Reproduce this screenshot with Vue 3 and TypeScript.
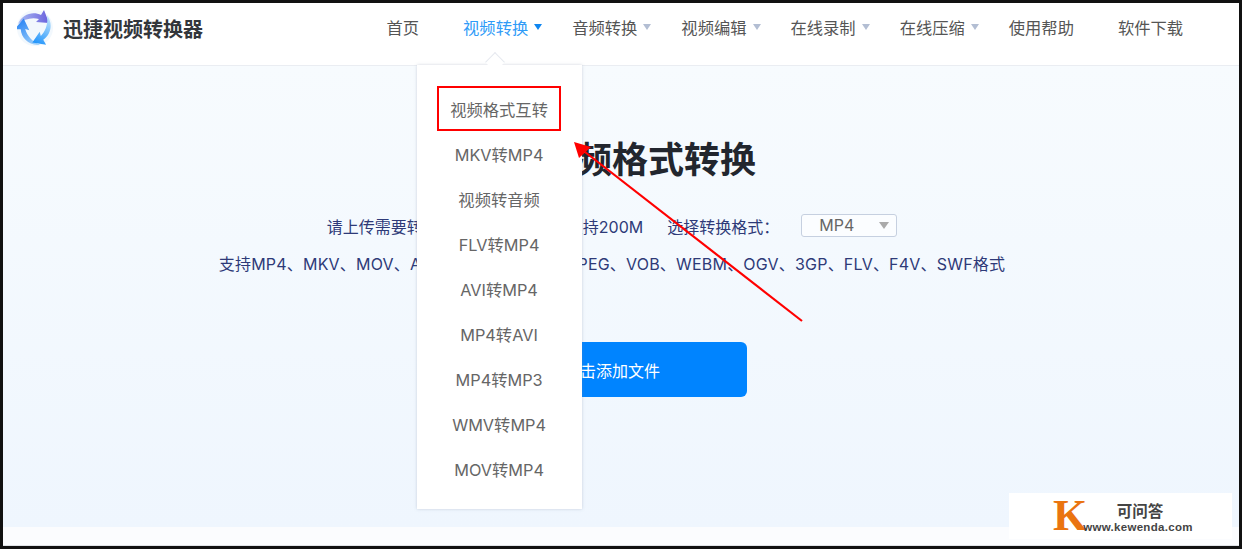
<script setup lang="ts">
const navItems = [
  { label: '首页', caret: false },
  { label: '视频转换', caret: true, active: true },
  { label: '音频转换', caret: true },
  { label: '视频编辑', caret: true },
  { label: '在线录制', caret: true },
  { label: '在线压缩', caret: true },
  { label: '使用帮助', caret: false },
  { label: '软件下载', caret: false },
]

const menuItems = [
  '视频格式互转',
  'MKV转MP4',
  '视频转音频',
  'FLV转MP4',
  'AVI转MP4',
  'MP4转AVI',
  'MP4转MP3',
  'WMV转MP4',
  'MOV转MP4',
]
</script>

<template>
  <div class="frame">
    <header class="header">
      <div class="brand">
        <svg class="logo" viewBox="-18 -18 36 36" width="36" height="36">
          <defs>
            <linearGradient id="g1" x1="0" y1="0" x2="1" y2="0">
              <stop offset="0" stop-color="#a9bdf4" />
              <stop offset="1" stop-color="#6a60dc" />
            </linearGradient>
            <linearGradient id="g2" x1="0" y1="0" x2="1" y2="0">
              <stop offset="0" stop-color="#a9d6fb" />
              <stop offset="1" stop-color="#2b86f4" />
            </linearGradient>
            <linearGradient id="g3" x1="0" y1="0" x2="1" y2="0">
              <stop offset="0" stop-color="#c6e6fc" />
              <stop offset="1" stop-color="#1c92fb" />
            </linearGradient>
          </defs>
          <circle r="18" fill="#f2f8fd" />
          <path fill="url(#g1)" d="M-17,-4 C-13,-14 -2,-17 6,-13 L9,-18 L14,-5 L1,-6 L4,-9 C-3,-11 -11,-9 -17,-4Z" />
          <path fill="url(#g2)" transform="rotate(-120)" d="M-17,-4 C-13,-14 -2,-17 6,-13 L9,-18 L14,-5 L1,-6 L4,-9 C-3,-11 -11,-9 -17,-4Z" />
          <path fill="url(#g3)" transform="rotate(120)" d="M-17,-4 C-13,-14 -2,-17 6,-13 L9,-18 L14,-5 L1,-6 L4,-9 C-3,-11 -11,-9 -17,-4Z" />
        </svg>
        <span class="brand-name">迅捷视频转换器</span>
      </div>
      <nav class="nav">
        <div v-for="item in navItems" :key="item.label" class="nav-item" :class="{ active: item.active, caret: item.caret }">
          {{ item.label }}
          <div v-if="item.active" class="menu">
            <span class="menu-notch"></span>
            <div v-for="(m, i) in menuItems" :key="m" class="menu-row" :class="{ marked: i === 0 }">{{ m }}</div>
          </div>
        </div>
      </nav>
    </header>

    <main class="hero">
      <h1 class="title">在线视频格式转换</h1>
      <div class="upload-row">
        <span>请上传需要转换的视频文件，最大支持200M</span>
        <span class="format-label">选择转换格式：</span>
        <div class="select">MP4</div>
      </div>
      <p class="formats">支持MP4、MKV、MOV、AVI、WMV、M4V、MPEG、VOB、WEBM、OGV、3GP、FLV、F4V、SWF格式</p>
      <button class="add-btn">点击添加文件</button>
    </main>
    <div class="foot"></div>

    <!-- annotation drawn over the screenshot -->
    <svg class="annotation" width="1242" height="549" viewBox="0 0 1242 549">
      <line x1="802" y1="321" x2="585" y2="152" stroke="#f00" stroke-width="2.2" />
      <polygon points="574,142 591,147 579,158" fill="#f00" />
    </svg>

    <div class="watermark">
      <span class="wm-k">K</span>
      <div class="wm-text">
        <span class="wm-cn">可问答</span>
        <span class="wm-url">www.kewenda.com</span>
      </div>
    </div>
  </div>
</template>

<style>
html,
body {
  margin: 0;
  background: #111;
}
</style>

<style scoped>
.frame {
  position: relative;
  box-sizing: border-box;
  width: 1242px;
  height: 549px;
  border: 3px solid #111;
  background: #fbfcfe;
  overflow: hidden;
  display: flex;
  flex-direction: column;
  font-family: Inter, "Noto Sans CJK SC", sans-serif;
}

.header {
  flex: none;
  box-sizing: border-box;
  height: 63px;
  padding: 0 0 12px 14px;
  background: #fff;
  border-bottom: 1px solid #eaedf2;
  display: flex;
  align-items: center;
}

.brand {
  display: flex;
  align-items: center;
  gap: 10px;
}

.logo {
  flex: none;
}

.brand-name {
  font-size: 20px;
  font-weight: 700;
  color: #33363b;
  white-space: nowrap;
}

.nav {
  margin-left: 183.5px;
  display: flex;
  gap: 44px;
}

.nav-item {
  position: relative;
  font-size: 16.3px;
  line-height: 24px;
  color: #555;
  white-space: nowrap;
}

.nav-item.caret::after {
  content: "";
  position: absolute;
  right: -14px;
  top: 8px;
  border-style: solid;
  border-width: 6px 4.5px 0;
  border-color: #b3bed3 transparent transparent;
}

.nav-item.active {
  color: #2f9bf7;
}

.nav-item.active::after {
  border-top-color: #0f86f0;
}

.menu {
  position: absolute;
  top: 49px;
  left: -46.5px;
  width: 165px;
  height: 444px;
  box-sizing: border-box;
  padding-top: 23px;
  background: #fff;
  box-shadow: 0 0 3px rgba(120, 135, 160, 0.35);
  z-index: 2;
}

.menu-notch {
  position: absolute;
  top: -10px;
  left: 71px;
  width: 13px;
  height: 13px;
  background: #fff;
  border: 1px solid #e6e9ef;
  border-right: 0;
  border-bottom: 0;
  transform: rotate(45deg);
}

.menu-row {
  position: relative;
  height: 45px;
  line-height: 45px;
  text-align: center;
  font-size: 16.3px;
  color: #666;
}

.menu-row.marked::before {
  content: "";
  position: absolute;
  left: 20px;
  top: -2px;
  width: 124px;
  height: 45px;
  box-sizing: border-box;
  border: 2px solid #f00;
}

.hero {
  flex: none;
  box-sizing: border-box;
  height: 461px;
  padding: 69px 18px 0 0;
  background: linear-gradient(#f7fbfe, #eff6fe);
  display: flex;
  flex-direction: column;
  align-items: center;
}

.title {
  margin: 0;
  font-size: 36px;
  line-height: 50px;
  font-weight: 700;
  color: #22262e;
}

.upload-row {
  margin-top: 29px;
  height: 23px;
  display: flex;
  align-items: center;
  font-size: 16px;
  color: #2e3a78;
  white-space: nowrap;
}

.format-label {
  margin-left: 24px;
  margin-right: 22px;
}

.select {
  position: relative;
  box-sizing: border-box;
  width: 96px;
  height: 23px;
  padding-left: 17px;
  line-height: 21px;
  border: 1px solid #c6d0e0;
  border-radius: 3px;
  color: #666;
  background: #fbfdff;
}

.select::after {
  content: "";
  position: absolute;
  right: 7px;
  top: 7px;
  border-style: solid;
  border-width: 7px 5px 0;
  border-color: #aaa transparent transparent;
}

.formats {
  margin: 15px 0 0;
  line-height: 24px;
  font-size: 16px;
  letter-spacing: 0.2px;
  color: #2e3a78;
  white-space: nowrap;
}

.add-btn {
  margin-top: 66px;
  width: 270px;
  height: 55px;
  border: 0;
  border-radius: 6px;
  background: #0084ff;
  color: #fff;
  font: inherit;
  font-size: 16px;
}

.foot {
  flex: 1;
  border-bottom: 1px solid #dfe2e6;
}

.annotation {
  position: absolute;
  left: -3px;
  top: -3px;
  pointer-events: none;
  z-index: 3;
}

.watermark {
  position: absolute;
  left: 1006px;
  top: 490px;
  width: 223px;
  height: 46px;
  background: #fff;
  z-index: 4;
  display: flex;
  align-items: flex-end;
  padding-left: 44px;
  box-sizing: border-box;
}

.wm-k {
  font-family: "Liberation Serif", serif;
  font-weight: 700;
  font-size: 44px;
  line-height: 46px;
  height: 46px;
  color: #ea7410;
  margin-right: -4px;
}

.wm-text {
  display: flex;
  flex-direction: column;
  align-items: center;
  padding-bottom: 5px;
  color: #444;
  font-family: "Liberation Sans", "Noto Sans CJK SC", sans-serif;
  font-weight: 700;
}

.wm-cn {
  margin-left: 4px;
  font-size: 15.5px;
  line-height: 18px;
}

.wm-url {
  font-size: 11.5px;
  line-height: 13px;
  letter-spacing: 0.3px;
}
</style>
